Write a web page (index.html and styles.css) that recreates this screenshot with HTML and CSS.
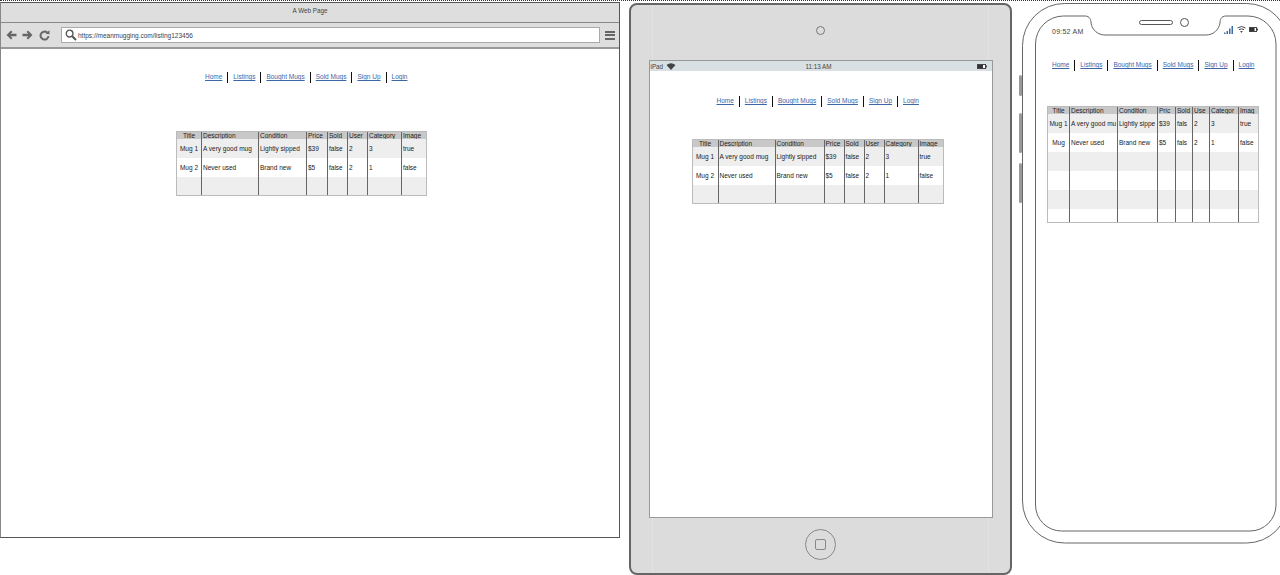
FILE: index.html
```html
<!DOCTYPE html>
<html>
<head>
<meta charset="utf-8">
<title>Mean Mugging wireframes</title>
<link rel="stylesheet" href="styles.css">
</head>
<body>
<div class="canvas">
<div class="dots"></div>

<!-- browser -->
<div class="browser">
	<div class="titlebar">A Web Page</div>
	<div class="toolbar">
		<svg class="tool tool-back" width="11" height="10" viewBox="0 0 11 10"><path d="M5 0.5 L0.5 5 L5 9.5 L6.5 8 L4.5 6.2 H10.5 V3.8 H4.5 L6.5 2 Z"/></svg>
		<svg class="tool tool-next" width="11" height="10" viewBox="0 0 11 10"><path d="M6 0.5 L10.5 5 L6 9.5 L4.5 8 L6.5 6.2 H0.5 V3.8 H6.5 L4.5 2 Z"/></svg>
		<svg class="tool tool-reload" width="11" height="11" viewBox="0 0 11 11"><path d="M9.5 6.2 A4 4 0 1 1 8.2 2.6" fill="none" stroke="#666" stroke-width="2"/><path d="M6.5 3.8 L10.5 4.2 V0.2 Z"/></svg>
		<div class="urlbox">
			<svg width="12" height="12" viewBox="0 0 12 12"><circle cx="4.6" cy="4.6" r="3.4" fill="none" stroke="#555" stroke-width="1.3"/><path d="M7.2 7.2 L11 11" stroke="#555" stroke-width="2"/></svg>
			<span>https://meanmugging.com/listing123456</span>
		</div>
		<div class="burger"><i></i><i></i><i></i></div>
	</div>
	<div class="page">
		<ul class="nav">
			<li><a href="#">Home</a></li><li><a href="#">Listings</a></li><li><a href="#">Bought Mugs</a></li><li><a href="#">Sold Mugs</a></li><li><a href="#">Sign Up</a></li><li><a href="#">Login</a></li>
		</ul>
		<table class="mugs mugs-browser">
			<colgroup><col class="c1"><col class="c2"><col class="c3"><col class="c4"><col class="c5"><col class="c6"><col class="c7"><col class="c8"></colgroup>
			<tr><th>Title</th><th>Description</th><th>Condition</th><th>Price</th><th>Sold</th><th>User</th><th>Category</th><th>Image</th></tr>
			<tr><td>Mug 1</td><td>A very good mug</td><td>Lightly sipped</td><td>$39</td><td>false</td><td>2</td><td>3</td><td>true</td></tr>
			<tr><td>Mug 2</td><td>Never used</td><td>Brand new</td><td>$5</td><td>false</td><td>2</td><td>1</td><td>false</td></tr>
			<tr class="last"><td></td><td></td><td></td><td></td><td></td><td></td><td></td><td></td></tr>
		</table>
	</div>
</div>

<!-- tablet -->
<div class="tablet">
	<div class="camera"></div>
	<div class="screen">
		<div class="statusbar">
			<span class="status-left">iPad
				<svg width="10" height="7" viewBox="0 0 10 7"><path d="M0.5 2 Q5 -1.5 9.5 2 L5 7 Z" fill="#444"/></svg>
			</span>
			<span>11:13 AM</span>
			<svg class="batt" width="10" height="5" viewBox="0 0 10 5"><rect x="0.5" y="0.5" width="8" height="4" fill="#fff" stroke="#444"/><rect x="1" y="1" width="5" height="3" fill="#333"/><rect x="9" y="1.5" width="1" height="2" fill="#444"/></svg>
		</div>
		<ul class="nav nav-tablet">
			<li><a href="#">Home</a></li><li><a href="#">Listings</a></li><li><a href="#">Bought Mugs</a></li><li><a href="#">Sold Mugs</a></li><li><a href="#">Sign Up</a></li><li><a href="#">Login</a></li>
		</ul>
		<table class="mugs mugs-tablet">
			<colgroup><col class="c1"><col class="c2"><col class="c3"><col class="c4"><col class="c5"><col class="c6"><col class="c7"><col class="c8"></colgroup>
			<tr><th>Title</th><th>Description</th><th>Condition</th><th>Price</th><th>Sold</th><th>User</th><th>Category</th><th>Image</th></tr>
			<tr><td>Mug 1</td><td>A very good mug</td><td>Lightly sipped</td><td>$39</td><td>false</td><td>2</td><td>3</td><td>true</td></tr>
			<tr><td>Mug 2</td><td>Never used</td><td>Brand new</td><td>$5</td><td>false</td><td>2</td><td>1</td><td>false</td></tr>
			<tr class="last"><td></td><td></td><td></td><td></td><td></td><td></td><td></td><td></td></tr>
		</table>
	</div>
	<div class="homebtn"><i></i></div>
</div>

<!-- phone -->
<svg class="phone-frame" width="264" height="550" viewBox="1016 0 264 550">
	<rect x="1019" y="75" width="3" height="21" rx="1.5" fill="#999"/>
	<rect x="1019" y="113" width="3" height="40" rx="1.5" fill="#999"/>
	<rect x="1019" y="163" width="3" height="40" rx="1.5" fill="#999"/>
	<rect x="1022.5" y="3.5" width="266" height="539.5" rx="42" fill="#fff" stroke="#666"/>
	<path d="M1035.5 44 A28 28 0 0 1 1063.5 16 H1085 C1090 16 1091 20 1091 23 C1092 30 1098 35 1105 35 H1206 C1213 35 1219 30 1220 23 C1220 20 1221 16 1226 16 H1248 A28 28 0 0 1 1276 44 V505 A26 26 0 0 1 1250 531 H1061.5 A26 26 0 0 1 1035.5 505 Z" fill="#fff" stroke="#666"/>
	<rect x="1139.5" y="20.5" width="33" height="4" rx="2" fill="#fff" stroke="#555"/>
	<circle cx="1184.5" cy="22.5" r="4" fill="#fff" stroke="#555"/>
</svg>
<div class="phone">
	<div class="phone-status">
		<span class="clock">09:52 AM</span>
		<span class="phone-icons">
			<svg width="9" height="9" viewBox="0 0 9 9"><path d="M0 7.5h1.5v1.500H0zM2.500 6H4v3H2.500zM5 3.500h1.500V9H5zM7.500 1H9v8H7.500z" fill="#3a6ea5"/></svg>
			<svg width="9" height="7" viewBox="0 0 9 7"><path d="M0.500 2 Q4.500 -1 8.500 2 M2 3.700 Q4.500 2 7 3.700" fill="none" stroke="#444"/><path d="M3.200 5 L4.500 7 L5.800 5 Z" fill="#444"/></svg>
			<svg width="9" height="5" viewBox="0 0 9 5"><rect x="0.500" y="0.500" width="7" height="4" fill="#fff" stroke="#444"/><rect x="1" y="1" width="4.500" height="3" fill="#333"/><rect x="8" y="1.500" width="1" height="2" fill="#444"/></svg>
		</span>
	</div>
	<ul class="nav nav-phone">
		<li><a href="#">Home</a></li><li><a href="#">Listings</a></li><li><a href="#">Bought Mugs</a></li><li><a href="#">Sold Mugs</a></li><li><a href="#">Sign Up</a></li><li><a href="#">Login</a></li>
	</ul>
	<table class="mugs mugs-phone">
		<colgroup><col class="c1"><col class="c2"><col class="c3"><col class="c4"><col class="c5"><col class="c6"><col class="c7"><col class="c8"></colgroup>
		<tr><th>Title</th><th>Description</th><th>Condition</th><th>Pric</th><th>Sold</th><th>Use</th><th>Categor</th><th>Imag</th></tr>
		<tr><td>Mug 1</td><td>A very good mu</td><td>Lightly sippe</td><td>$39</td><td>fals</td><td>2</td><td>3</td><td>true</td></tr>
		<tr><td>Mug</td><td>Never used</td><td>Brand new</td><td>$5</td><td>fals</td><td>2</td><td>1</td><td>false</td></tr>
		<tr><td></td><td></td><td></td><td></td><td></td><td></td><td></td><td></td></tr>
		<tr><td></td><td></td><td></td><td></td><td></td><td></td><td></td><td></td></tr>
		<tr><td></td><td></td><td></td><td></td><td></td><td></td><td></td><td></td></tr>
		<tr class="short"><td></td><td></td><td></td><td></td><td></td><td></td><td></td><td></td></tr>
	</table>
</div>
</div>
</body>
</html>
```

FILE: styles.css
```css
*{box-sizing:border-box;}
html,body{margin:0;padding:0;background:#fff;}
body{font-family:"Liberation Sans",Arial,sans-serif;font-size:6.5px;color:#222;}
.canvas{position:relative;width:1280px;height:575px;overflow:hidden;}
.dots{position:absolute;left:0;top:0;width:100%;border-top:1px dotted #333;}

/*browser*/
.browser{position:absolute;left:0;top:2px;width:620px;height:536px;border:1px solid #555;border-left-color:#888;background:#fff;}
.titlebar{height:20px;line-height:15px;text-align:center;background:#dedede;border-bottom:1px solid #888;color:#444;font-size:6.3px;}
.toolbar{height:26px;display:flex;align-items:center;padding:0 4px 0 5px;background:#dedede;border-bottom:2px solid #999;}
.tool{fill:#666;flex:none;}
.tool-next{margin-left:5px;}
.tool-reload{margin-left:6px;}
.urlbox{flex:1;height:16px;margin-left:11px;display:flex;align-items:center;gap:1px;padding-left:3px;background:#fff;border:1px solid #aaa;font-size:6.5px;color:#345;}
.burger{width:10px;margin-left:5px;display:flex;flex-direction:column;gap:1.5px;}
.burger i{display:block;height:2px;background:#666;}
.page{display:flex;flex-direction:column;align-items:flex-start;}

/*nav*/
.nav{display:flex;list-style:none;margin:23px 0 0 204px;padding:0;height:11px;align-items:center;}
.nav li{height:11px;line-height:10px;padding:0 5px;border-left:1.5px solid #111;white-space:nowrap;}
.nav li:first-child{border-left:none;padding-left:0;}
.nav li:last-child{padding-right:0;}
.nav a{color:#3b66a8;}
.nav-tablet{margin:25px 0 0 67px;}
.nav-phone{margin:0 0 0 16px;}

/*tables*/
.mugs{table-layout:fixed;border-collapse:separate;border-spacing:0;border:1px solid #bbb;color:#222;}
.mugs th,.mugs td{padding:0 1px;border-left:1px solid #666;overflow:hidden;white-space:nowrap;text-align:left;font-weight:normal;}
.mugs th:first-child,.mugs td:first-child{border-left:none;text-align:center;}
.mugs th{height:7px;line-height:7px;background:#c8c8c8;}
.mugs td{height:19px;}
.mugs tr:nth-child(even) td{background:#eee;}
.mugs tr:nth-child(odd) td{background:#fff;}
.mugs .last td{height:18px;}
.mugs .short td{height:13px;}

.mugs-browser{width:251px;margin:48px 0 0 175px;}
.mugs-browser .c1{width:24px;}
.mugs-browser .c2{width:57px;}
.mugs-browser .c3{width:48px;}
.mugs-browser .c4{width:21px;}
.mugs-browser .c5{width:20px;}
.mugs-browser .c6{width:20px;}
.mugs-browser .c7{width:34px;}
.mugs-browser .c8{width:25px;}

.mugs-tablet{width:252px;margin:32px 0 0 42px;}
.mugs-tablet .c1{width:25px;}
.mugs-tablet .c2{width:57px;}
.mugs-tablet .c3{width:49px;}
.mugs-tablet .c4{width:20px;}
.mugs-tablet .c5{width:20px;}
.mugs-tablet .c6{width:20px;}
.mugs-tablet .c7{width:34px;}
.mugs-tablet .c8{width:25px;}

.mugs-phone{width:212px;margin:35px 0 0 11px;}
.mugs-phone .c1{width:21px;}
.mugs-phone .c2{width:48px;}
.mugs-phone .c3{width:40px;}
.mugs-phone .c4{width:18px;}
.mugs-phone .c5{width:17px;}
.mugs-phone .c6{width:17px;}
.mugs-phone .c7{width:29px;}
.mugs-phone .c8{width:20px;}

/*tablet*/
.tablet{position:absolute;left:629px;top:3px;width:383px;height:572px;border:2px solid #666;border-radius:8px;display:flex;flex-direction:column;align-items:center;
	background-color:#dcdcdc;
	background-image:linear-gradient(#e3e3e3,#e3e3e3),linear-gradient(#e3e3e3,#e3e3e3);
	background-size:1px 100%;
	background-position:21px 0,357px 0;
	background-repeat:no-repeat;}
.camera{width:9px;height:9px;margin-top:21px;border:1px solid #777;border-radius:50%;}
.screen{width:344px;height:458px;margin-top:25px;background:#fff;border:1px solid #999;}
.statusbar{height:10px;padding:0 5px 0 1px;display:grid;grid-template-columns:1fr auto 1fr;align-items:center;background:#d8e0e3;font-size:6.3px;color:#444;}
.status-left{display:flex;align-items:center;gap:3px;}
.batt{justify-self:end;}
.homebtn{width:31px;height:31px;margin-top:11px;border:1px solid #888;border-radius:50%;display:flex;align-items:center;justify-content:center;}
.homebtn i{display:block;width:11px;height:11px;border:1px solid #888;border-radius:2px;}

/*phone*/
.phone-frame{position:absolute;left:1016px;top:0;}
.phone{position:absolute;left:1036px;top:16px;width:240px;}
.phone-status{height:29px;padding:0 18px 0 16px;display:flex;justify-content:space-between;align-items:center;}
.clock{font-size:7px;letter-spacing:.25px;color:#444;margin-top:2px;}
.phone-icons{display:flex;align-items:center;gap:3.5px;margin-top:-2px;}
.phone .nav{margin-top:15px;}
```
